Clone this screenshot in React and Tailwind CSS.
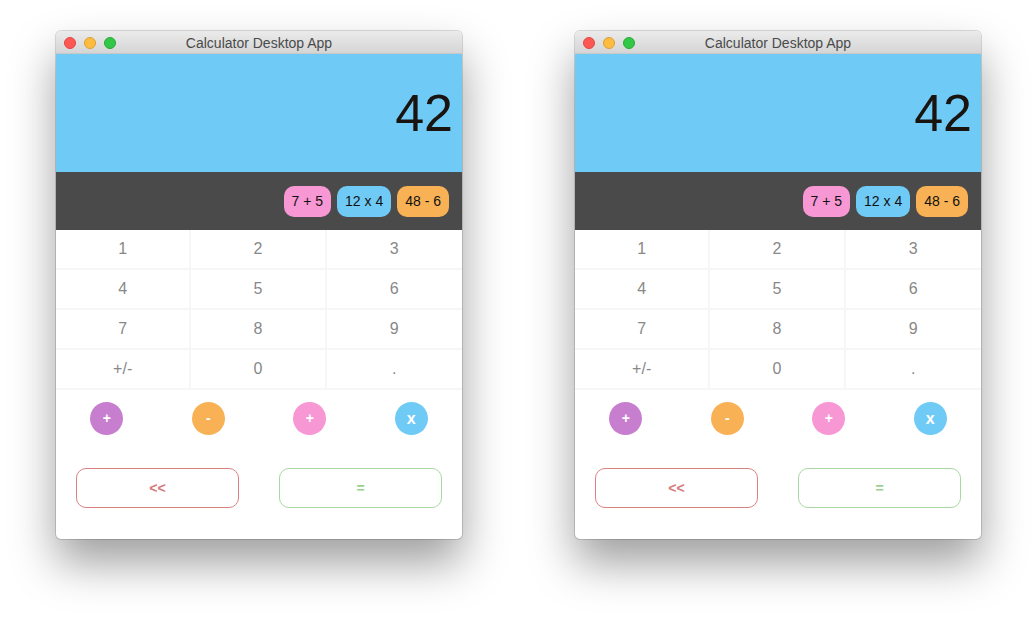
const keys = ['1', '2', '3', '4', '5', '6', '7', '8', '9', '+/-', '0', '.'];

const history = [
    { label: '7 + 5', color: 'bg-[#f797d4]' },
    { label: '12 x 4', color: 'bg-[#6fcbf6]' },
    { label: '48 - 6', color: 'bg-[#f9b155]' },
];

const operators = [
    { label: '+', color: 'bg-[#c87ecf]' },
    { label: '-', color: 'bg-[#f9b155]' },
    { label: '+', color: 'bg-[#f797d4]' },
    { label: 'x', color: 'bg-[#6fcbf6]', big: true },
];

const CalculatorWindow = () => (
    <div className="w-[406px] h-[508px] rounded-[5px] bg-white flex flex-col overflow-hidden shadow-[0_24px_45px_rgba(0,0,0,0.38),0_0_0_1px_rgba(0,0,0,0.14)]">
        {/* title bar */}
        <div className="relative h-[23px] flex items-center justify-center pt-[2px] bg-gradient-to-b from-[#ebebeb] to-[#d5d5d5] border-b border-[#c8c8c8]">
            <div className="absolute left-[8px] top-[6px] flex gap-[8px]">
                <span className="w-[12px] h-[12px] rounded-full bg-[#fc5753] border border-[#df4744]" />
                <span className="w-[12px] h-[12px] rounded-full bg-[#fdbc40] border border-[#de9f34]" />
                <span className="w-[12px] h-[12px] rounded-full bg-[#33c748] border border-[#27aa35]" />
            </div>
            <span className="text-[14px] text-[#4a4a4a]">Calculator Desktop App</span>
        </div>

        {/* display */}
        <div className="h-[118px] bg-[#6fcbf6] flex items-center justify-end pr-[9px]">
            <span className="text-[52px] leading-none text-[#1a1410]">42</span>
        </div>

        {/* history */}
        <div className="h-[58px] bg-[#4a4a4a] flex items-center justify-end gap-[6px] pr-[13px]">
            {history.map((h) => (
                <span key={h.label} className={`h-[31px] px-2 rounded-[10px] flex items-center text-[14px] text-[#111] ${h.color}`}>
                    {h.label}
                </span>
            ))}
        </div>

        {/* keypad */}
        <div className="grid grid-cols-3">
            {keys.map((k, i) => (
                <button
                    key={k}
                    className={`h-[40px] flex items-center justify-center text-[16px] text-[#888] border-b-2 border-[#f6f6f6] ${i % 3 !== 2 ? 'border-r-2' : ''}`}
                >
                    {k}
                </button>
            ))}
        </div>

        {/* operators */}
        <div className="grid grid-cols-4 pt-[12px]">
            {operators.map((op, i) => (
                <div key={i} className="flex justify-center">
                    <button className={`w-[33px] h-[33px] rounded-full flex items-center justify-center text-white font-bold ${op.big ? 'text-[16px]' : 'text-[14px]'} ${op.color}`}>
                        {op.label}
                    </button>
                </div>
            ))}
        </div>

        {/* actions */}
        <div className="grid grid-cols-2 mt-[33px]">
            <button className="mx-[20px] h-[40px] rounded-[10px] border border-[#d98282] text-[#d47a7a] font-bold text-[14px]">&lt;&lt;</button>
            <button className="mx-[20px] h-[40px] rounded-[10px] border border-[#a9d9a2] text-[#98d090] font-bold text-[14px]">=</button>
        </div>
    </div>
);

const App = () => (
    <div className="w-[1036px] h-[619px] bg-white flex gap-[113px] pl-[56px] pt-[31px] font-['Liberation_Sans',Arial,sans-serif]">
        <CalculatorWindow />
        <CalculatorWindow />
    </div>
);

export default App;
